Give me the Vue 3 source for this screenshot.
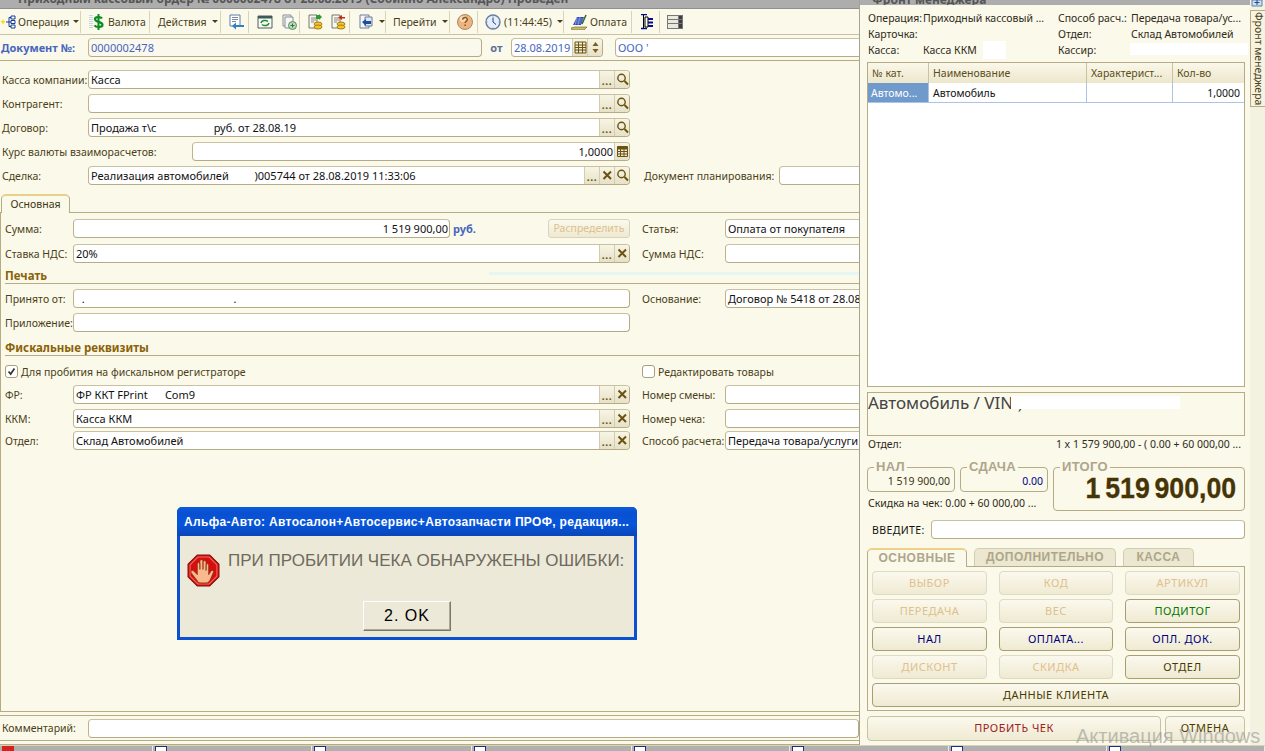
<script setup>
const L = (text, w, extra = {}) => ({ k: 'l', text, w, ...extra })
const F = (w, text = '', extra = {}) => ({ k: 'f', w, text, ...extra })
const DM = ['dots', 'mag']
const DX = ['dots', 'x']

const top = [
  { cells: [L('Касса компании:', 86), F(542, 'Касса', { btns: DM })] },
  { cells: [L('Контрагент:', 86), F(542, '', { btns: DM })] },
  { cells: [L('Договор:', 86), F(542, 'Продажа т\\с                    руб. от 28.08.19', { btns: DM })] },
  { cells: [L('Курс валюты взаиморасчетов:', 190), F(438, '1,0000', { alignEnd: true, btns: ['calc'] })] },
  { cells: [L('Сделка:', 86), F(542, 'Реализация автомобилей         )005744 от 28.08.2019 11:33:06', { btns: ['dots', 'x', 'mag'] }), L('Документ планирования:', 135, { ml: 14 }), F(100)] }
]

const rL = (t) => L(t, 83, { ml: 12 })
const body1 = [
  { mt: 6, cells: [L('Сумма:', 68), F(377, '1 519 900,00', { alignEnd: true }), { k: 'rub' }, { k: 'dist' }, rL('Статья:'), F(140, 'Оплата от покупателя')] },
  { mt: 6, cells: [L('Ставка НДС:', 68), F(557, '20%', { btns: DX }), rL('Сумма НДС:'), F(140)] }
]
const body2 = [
  { mt: 5, cells: [L('Принято от:', 68), F(557, '  .                                                    .'), rL('Основание:'), F(140, 'Договор № 5418 от 28.08.')] },
  { mt: 5, cells: [L('Приложение:', 68), F(557)] }
]
const body3 = [
  { mt: 0, cells: [L('ФР:', 68), F(557, 'ФР ККТ FPrint      Com9', { btns: DX }), rL('Номер смены:'), F(140)] },
  { mt: 5, cells: [L('ККМ:', 68), F(557, 'Касса ККМ', { btns: DX }), rL('Номер чека:'), F(140)] },
  { mt: 3, cells: [L('Отдел:', 68), F(557, 'Склад Автомобилей', { btns: DX }), rL('Способ расчета:'), F(140, 'Передача товара/услуги')] }
]

const toolbar = [
  { w: 81, pl: 0, icon: 'op', text: 'Операция', caret: true, gap: 2 },
  { w: 69, pl: 8, icon: 'usd', text: 'Валюта' },
  { w: 71, pl: 8, text: 'Действия', caret: true },
  { w: 28, pl: 7, icon: 'back' },
  { w: 51, pl: 8, icons: ['cycle', 'plus'], gap: 8 },
  { w: 50, pl: 7, icons: ['coinG', 'coinR'], gap: 7 },
  { w: 36, pl: 8, icon: 'go', caret: true },
  { w: 64, pl: 7, text: 'Перейти', caret: true },
  { w: 28, pl: 7, icon: 'help' },
  { w: 86, pl: 7, icon: 'clock', text: '(11:44:45)', caret: true },
  { w: 68, pl: 7, icon: 'pay', text: 'Оплата' },
  { w: 28, pl: 8, icon: 'tree' },
  { w: 30, pl: 7, icon: 'list', last: true }
]

const icons = {
  op: '<path d="M3 5l.8 2 2 .8-2 .8L3 11l-.8-2.400-2-.8 2-.8z" fill="#f5d800"/><path d="M6 8h3M9 3.500v9M9 3.500h2M9 8h2M9 12.500h2" stroke="#123c9c" fill="none"/><path d="M11 2h4v3h-4zM11 6.500h4v3h-4zM11 11h4v3h-4z" fill="#fff" stroke="#123c9c"/>',
  usd: '<path d="M1 1v14M3 1v14" stroke="#8fb1dc" stroke-dasharray="1 1"/><path d="M13 4.500C12 2.800 6 2.300 6 5.200c0 3 7.500 2.300 7.500 5.500 0 3-6.500 2.800-8 .6" fill="none" stroke="#0a8a20" stroke-width="2.200"/><path d="M9.500 0v16" stroke="#0a8a20" stroke-width="2"/>',
  back: '<path d="M2 1h10v11H2z" fill="#fff" stroke="#5c7fa8"/><path d="M4 3.500h6M4 5.500h6M4 7.500h4" stroke="#7d8c9c"/><path d="M16 11H8V8.500L4 12l4 3.500V13h8z" fill="#2e7fc4"/>',
  cycle: '<path d="M1 2h14v12H1z" fill="#fafaf2" stroke="#4f5f5f"/><path d="M1 2h14v2.500H1z" fill="#3b5a5a"/><path d="M4 9a4 3 0 0 1 7-1.500M12 9a4 3 0 0 1-7 1.500" fill="none" stroke="#1c8a3a" stroke-width="1.500"/>',
  plus: '<path d="M2 1h8v11H2z" fill="#f3f3f1" stroke="#8b8f93"/><path d="M4 3h8v11H4z" fill="#f6f6f4" stroke="#8b8f93"/><circle cx="11.500" cy="11.500" r="4" fill="#bcd9b8" stroke="#5d8a6a"/><path d="M9.500 11.500h4M11.500 9.500v4" stroke="#2b7a3a"/>',
  coinG: '<path d="M2 1h8v13H2z" fill="#f8f8ee" stroke="#777"/><path d="M4 4h5M4 6h5M4 8h3" stroke="#888"/><path d="M9 1h3v-1l3 3-3 3V5H9z" fill="#2e9a35"/><ellipse cx="11" cy="10" rx="4" ry="2" fill="#f1c232" stroke="#a77f10"/><ellipse cx="11" cy="13" rx="4" ry="2" fill="#f1c232" stroke="#a77f10"/>',
  coinR: '<path d="M2 1h8v13H2z" fill="#f8f8ee" stroke="#777"/><path d="M4 4h5M4 6h5M4 8h3" stroke="#888"/><path d="M15 3h-3V1L8 3.500 12 6V4.500h3z" fill="#c92a20"/><ellipse cx="11" cy="10" rx="4" ry="2" fill="#f1c232" stroke="#a77f10"/><ellipse cx="11" cy="13" rx="4" ry="2" fill="#f1c232" stroke="#a77f10"/>',
  go: '<path d="M2 1h9v13H2z" fill="#f4f6fb" stroke="#6f7f95"/><path d="M7 3h7v9H7z" fill="#dfe8f6" stroke="#6f7f95"/><path d="M4 8l4-3v2h5v3H8v2z" fill="#1c4fa0"/>',
  help: '<circle cx="8" cy="8" r="7.500" fill="#eeb47e" stroke="#a98a6a"/><circle cx="6" cy="5" r="3" fill="#f7dcc0"/><path d="M5.700 5.800c0-3 4.700-3 4.700-.4 0 1.800-2.300 1.700-2.300 3.600" fill="none" stroke="#8a5a22" stroke-width="1.400"/><path d="M7.300 10.500h1.600v1.600H7.300z" fill="#8a5a22"/>',
  clock: '<circle cx="8" cy="8" r="7" fill="#e6eefb" stroke="#6a7f9f" stroke-width="1.400"/><path d="M8 3.500V8l3 2.500" fill="none" stroke="#1d3f88"/><path d="M8 1.500v1M8 13.500v1M1.500 8h1M13.500 8h1" stroke="#59a"/>',
  pay: '<path d="M0 14l4-1h12l-3 3H1z" fill="#cdbb6c" stroke="#5f5a2a" stroke-width=".6"/><path d="M2 11l4-8h7l-3 8z" fill="#2a47b8"/><path d="M4 9h6M5 7h6M6 5h6M6 3l-2 8M9 3l-2 8" stroke="#a8b8ee" stroke-width=".6"/><path d="M11 10l4-9" stroke="#2f6a25" stroke-width="1.500"/>',
  tree: '<path d="M1 .5h6M1 14.500h6" stroke="#000a8a" stroke-width="1.400"/><path d="M3.500 1v13" stroke="#000" /><path d="M5 3h3v10H5z" fill="#fff" stroke="#000"/><path d="M8 4h5v2H8zM8 7.500h5v2H8zM8 11h5v2H8z" fill="#0a0a8a"/>',
  list: '<path d="M0 1h16v14H0z" fill="#777"/><path d="M1 2h10v3H1zM1 6h10v3H1zM1 10h10v4H1z" fill="#e9e9e0"/><path d="M12 2h3v3h-3zM12 6h3v3h-3zM12 10h3v4h-3z" fill="#3e3e3e"/>',
  mag: '<circle cx="6.500" cy="6" r="3.700" fill="none" stroke="#6a5310" stroke-width="1.400"/><path d="M9.500 9l3.500 3.500" stroke="#6a5310" stroke-width="2"/>',
  x: '<path d="M3.500 3.500l7.500 7.500M11 3.500L3.500 11" stroke="#6a5310" stroke-width="2"/>',
  calc: '<path d="M2.500 2.500h10v10h-10z" fill="none" stroke="#6a5310"/><path d="M2.500 5h10M2.500 7.500h10M2.500 10h10M5.500 5v7.500M9 5v7.500" stroke="#6a5310"/><path d="M2.500 2.500h10V5h-10z" fill="#6a5310"/>',
  cal: '<path d="M2 2h11v11H2z" fill="none" stroke="#6a5310"/><path d="M2 5h11M2 7.500h11M2 10h11M5.500 2v11M9.500 2v11" stroke="#6a5310"/>',
  spin: '<path d="M7.500 2l3 4h-6zM7.500 13l3-4h-6z" fill="#7a5f18"/>'
}

const info = [
  ['Операция:', 'Приходный кассовый ...', 'Способ расч.:', 'Передача товара/ус...'],
  ['Карточка:', '', 'Отдел:', 'Склад Автомобилей'],
  ['Касса:', 'Касса ККМ', 'Кассир:', '']
]

const keys = [
  { t: 'ВЫБОР', off: true }, { t: 'КОД', off: true }, { t: 'АРТИКУЛ', off: true },
  { t: 'ПЕРЕДАЧА', off: true }, { t: 'ВЕС', off: true }, { t: 'ПОДИТОГ', c: 'green' },
  { t: 'НАЛ', c: 'navy' }, { t: 'ОПЛАТА...', c: 'navy' }, { t: 'ОПЛ. ДОК.', c: 'navy' },
  { t: 'ДИСКОНТ', off: true }, { t: 'СКИДКА', off: true }, { t: 'ОТДЕЛ', c: 'olive' },
  { t: 'ДАННЫЕ КЛИЕНТА', c: 'olive', wide: true }
]

const tasks = [153, 159, 160, 160, 158, 159, 158, 158]
</script>

<template>
  <div class="app">
    <div class="main">
      <section class="left">
        <div class="title"><b>Приходный кассовый ордер № 0000002478 от 28.08.2019 (Собинно Александро) Проведен</b></div>

        <div class="toolbar">
          <div v-for="(g, i) in toolbar" :key="i" class="tb" :class="{ last: g.last }" :style="{ width: g.w + 'px', paddingLeft: g.pl + 'px', gap: (g.gap || 3) + 'px' }">
            <svg v-if="g.icon" class="ti" viewBox="0 0 16 16" v-html="icons[g.icon]"></svg>
            <svg v-for="n in g.icons || []" :key="n" class="ti" viewBox="0 0 16 16" v-html="icons[n]"></svg>
            <span v-if="g.text" class="tt">{{ g.text }}</span>
            <i v-if="g.caret" class="caret"></i>
          </div>
        </div>

        <div class="docrow">
          <b class="doclbl">Документ №:</b>
          <div class="fld dis blue docnum"><span class="val">0000002478</span></div>
          <b class="ot">от</b>
          <div class="fld blue date">
            <span class="val">28.08.2019</span>
            <span class="bt"><svg viewBox="0 0 15 15" v-html="icons.cal"></svg></span>
            <span class="bt"><svg viewBox="0 0 15 15" v-html="icons.spin"></svg></span>
          </div>
          <div class="fld blue org"><span class="val">ООО '</span></div>
        </div>

        <div class="form">
          <div class="toprows">
            <div v-for="(r, i) in top" :key="i" class="row">
              <template v-for="(c, j) in r.cells" :key="j">
                <span v-if="c.k === 'l'" class="lbl" :style="{ width: c.w + 'px', marginLeft: (c.ml || 0) + 'px' }">{{ c.text }}</span>
                <div v-else class="fld" :style="{ width: c.w + 'px' }">
                  <span class="val" :class="{ end: c.alignEnd }">{{ c.text }}</span>
                  <span v-for="b in c.btns || []" :key="b" class="bt">
                    <span v-if="b === 'dots'" class="dots">...</span>
                    <svg v-else viewBox="0 0 15 15" v-html="icons[b]"></svg>
                  </span>
                </div>
              </template>
            </div>
          </div>

          <div class="tabhead"><span class="tab">Основная</span></div>

          <div class="tabbody">
            <div v-for="(r, i) in body1" :key="'a' + i" class="row" :style="{ marginTop: r.mt + 'px' }">
              <template v-for="(c, j) in r.cells" :key="j">
                <span v-if="c.k === 'l'" class="lbl" :style="{ width: c.w + 'px', marginLeft: (c.ml || 0) + 'px' }">{{ c.text }}</span>
                <b v-else-if="c.k === 'rub'" class="rub">руб.</b>
                <span v-else-if="c.k === 'dist'" class="dist">Распределить</span>
                <div v-else class="fld" :style="{ width: c.w + 'px' }">
                  <span class="val" :class="{ end: c.alignEnd }">{{ c.text }}</span>
                  <span v-for="b in c.btns || []" :key="b" class="bt">
                    <span v-if="b === 'dots'" class="dots">...</span>
                    <svg v-else viewBox="0 0 15 15" v-html="icons[b]"></svg>
                  </span>
                </div>
              </template>
            </div>

            <div class="sect s1"><b>Печать</b></div>

            <div v-for="(r, i) in body2" :key="'b' + i" class="row" :style="{ marginTop: r.mt + 'px' }">
              <template v-for="(c, j) in r.cells" :key="j">
                <span v-if="c.k === 'l'" class="lbl" :style="{ width: c.w + 'px', marginLeft: (c.ml || 0) + 'px' }">{{ c.text }}</span>
                <div v-else class="fld" :style="{ width: c.w + 'px' }"><span class="val">{{ c.text }}</span></div>
              </template>
            </div>

            <div class="sect s2"><b>Фискальные реквизиты</b></div>

            <div class="checks">
              <label class="chk c1"><span class="box"><svg viewBox="0 0 13 13"><path d="M3 6.500l2.500 3L10 3" fill="none" stroke="#333" stroke-width="2"/></svg></span>Для пробития на фискальном регистраторе</label>
              <label class="chk"><span class="box"></span>Редактировать товары</label>
            </div>

            <div v-for="(r, i) in body3" :key="'c' + i" class="row" :style="{ marginTop: r.mt + 'px' }">
              <template v-for="(c, j) in r.cells" :key="j">
                <span v-if="c.k === 'l'" class="lbl" :style="{ width: c.w + 'px', marginLeft: (c.ml || 0) + 'px' }">{{ c.text }}</span>
                <div v-else class="fld" :style="{ width: c.w + 'px' }">
                  <span class="val">{{ c.text }}</span>
                  <span v-for="b in c.btns || []" :key="b" class="bt">
                    <span v-if="b === 'dots'" class="dots">...</span>
                    <svg v-else viewBox="0 0 15 15" v-html="icons[b]"></svg>
                  </span>
                </div>
              </template>
            </div>
          </div>
        </div>

        <div class="comment">
          <span class="lbl cl">Комментарий:</span>
          <div class="fld cf"></div>
        </div>
      </section>

      <aside class="rpanel">
        <div class="rtitle"><b>Фронт менеджера</b></div>

        <div class="info">
          <template v-for="(r, i) in info" :key="i">
            <span v-for="(c, j) in r" :key="j" class="icell">{{ c }}</span>
          </template>
          <i class="mask m1"></i>
          <i class="mask m2"></i>
        </div>

        <div class="table">
          <div class="th">№ кат.</div>
          <div class="th">Наименование</div>
          <div class="th">Характерист...</div>
          <div class="th">Кол-во</div>
          <div class="td sel">Автомо...</div>
          <div class="td">Автомобиль</div>
          <div class="td"></div>
          <div class="td qty">1,0000</div>
        </div>

        <div class="vin">Автомобиль / VIN )<i class="vinmask"></i></div>

        <div class="sub">
          <span>Отдел:</span>
          <span>1 x 1 579 900,00 - ( 0.00 + 60 000,00 ...</span>
        </div>

        <div class="totals">
          <div class="tleft">
            <div class="pair">
              <fieldset class="fs small"><legend>НАЛ</legend><div class="amt">1 519 900,00</div></fieldset>
              <fieldset class="fs small"><legend>СДАЧА</legend><div class="amt nv">0.00</div></fieldset>
            </div>
            <div class="disc">Скидка на чек: 0.00 + 60 000,00 ...</div>
          </div>
          <fieldset class="fs big"><legend>ИТОГО</legend><div class="sum"><span>1 519 900,00</span></div></fieldset>
        </div>

        <div class="enter">
          <span class="el">ВВЕДИТЕ:</span>
          <div class="fld ef"></div>
        </div>

        <div class="ktabs">
          <span class="ktab on">ОСНОВНЫЕ</span>
          <span class="ktab k2">ДОПОЛНИТЕЛЬНО</span>
          <span class="ktab k3">КАССА</span>
        </div>
        <div class="keys">
          <button v-for="k in keys" :key="k.t" class="key" :class="[k.c, { off: k.off, wide: k.wide }]">{{ k.t }}</button>
        </div>

        <div class="actions">
          <button class="key act1">ПРОБИТЬ ЧЕК</button>
          <button class="key act2">ОТМЕНА</button>
        </div>
      </aside>

      <div class="strip">
        <svg class="plus" viewBox="0 0 12 7"><path d="M1 0h10v6H1z" fill="#cfe0f4" stroke="#5a7fb0"/><path d="M3.500 2.500h5M6 0v5" stroke="#234a88"/></svg>
        <div class="vtab">Фронт менеджера</div>
      </div>
    </div>

    <div class="taskbar">
      <div v-for="(w, i) in tasks" :key="i" class="task" :style="{ width: w + 'px' }"><i class="tic" :class="{ red: i === 0 }"></i></div>
    </div>

    <div class="dialog">
      <div class="dtitle">Альфа-Авто: Автосалон+Автосервис+Автозапчасти ПРОФ, редакция...</div>
      <div class="dbody">
        <div class="dmsg">
          <svg class="stop" viewBox="0 0 32 32">
            <path d="M10 1h12l9 9v12l-9 9H10l-9-9V10z" fill="#d40f0f" stroke="#8a0a0a"/>
            <path d="M10.500 3h11L29 10.500v11L21.500 29h-11L3 21.500v-11z" fill="none" stroke="#f26a5a"/>
            <path d="M10 26c-2-3-5-6-6-8s2-3 3-1l3 3V10c0-2 2.500-2 2.500 0v5-8c0-2 3-2 3 0v8-7c0-2 3-2 3 0v8-5c0-2 2.500-2 2.500 0v9l2-3c1-2 3.500-1 2.500 1l-3 7c-1 2-2 3-4 3h-5c-2 0-3-.5-3.500-2z" fill="#f8b98e" stroke="#8a3010" stroke-width=".7"/>
          </svg>
          <span>ПРИ ПРОБИТИИ ЧЕКА ОБНАРУЖЕНЫ ОШИБКИ:</span>
        </div>
        <button class="ok">2. OK</button>
      </div>
    </div>

    <div class="watermark">Активация Windows</div>
  </div>
</template>

<style>
html, body { margin: 0; padding: 0; background: #fbf9ea; }
</style>

<style scoped>
.app {
  position: relative;
  width: 1265px;
  height: 751px;
  overflow: hidden;
  display: flex;
  flex-direction: column;
  background: #fbf9ea;
  font-family: "Noto Sans", "Liberation Sans", sans-serif;
  font-size: 10.500px;
  color: #4a3f18;
}
.main { display: flex; height: 745px; }

/* left */
.left {
  width: 860px;
  flex: none;
  display: flex;
  flex-direction: column;
  overflow: hidden;
  box-sizing: border-box;
  border-right: 1px solid #a8a48c;
  border-bottom: 1px solid #b5ab85;
}
.title {
  height: 8px;
  background: #adadad;
  overflow: hidden;
  white-space: nowrap;
  padding-left: 18px;
  color: #555;
  line-height: 0;
  border-bottom: 1px solid #8f8f8f;
}
.title b { display: block; font-size: 12px; line-height: 8px; margin-top: -5px; }
.toolbar {
  height: 26px;
  display: flex;
  align-items: center;
  box-sizing: border-box;
  border-bottom: 1px solid #c9c3a2;
}
.tb {
  flex: none;
  box-sizing: border-box;
  height: 22px;
  display: flex;
  align-items: center;
  border-right: 1px solid #d9d4b8;
}
.tb.last { border-right: 0; }
.ti { width: 16px; height: 16px; flex: none; }
.tt { white-space: nowrap; font-size: 10.500px; }
.caret {
  width: 0; height: 0;
  margin-left: 2px;
  border: 3px solid transparent;
  border-top: 3px solid #4a3f18;
  border-bottom: 0;
}
.docrow {
  height: 26px;
  display: flex;
  align-items: center;
  box-sizing: border-box;
  padding: 0 0 0 1px;
  border-bottom: 1px solid #b5ab85;
}
.doclbl { width: 87px; color: #4766bd; flex: none; font-size: 11px; }
.docnum { width: 394px; }
.ot { width: 29px; text-align: center; color: #5d7099; flex: none; font-size: 11px; }
.date { width: 92px; }
.org { width: 250px; margin-left: 12px; }

.fld {
  box-sizing: border-box;
  flex: none;
  height: 19px;
  display: flex;
  background: #fff;
  border: 1px solid #b5ab85;
  border-top-color: #c9c2a2;
  border-left-color: #bdb48e;
  border-radius: 4px;
  overflow: hidden;
  color: #111;
}
.fld.dis { background: #fbf9ee; }
.fld.blue { color: #4766bd; }
.val {
  flex: 1;
  min-width: 0;
  line-height: 17px;
  padding: 0 1px 0 2px;
  white-space: pre;
  overflow: hidden;
  font-size: 11px;
}
.val.end { text-align: right; }
.bt {
  flex: none;
  width: 15px;
  height: 17px;
  display: flex;
  align-items: center;
  justify-content: center;
  background: linear-gradient(#f8f5e4, #e6e1c8);
  border-left: 1px solid #d3cdb0;
  box-sizing: border-box;
}
.bt svg { width: 15px; height: 15px; flex: none; }
.dots { font-weight: 700; color: #6a5310; line-height: 14px; letter-spacing: .5px; align-self: flex-end; }

.form { flex: 1; display: flex; flex-direction: column; min-height: 0; }
.toprows { padding: 9px 0 0 2px; }
.toprows .row + .row { margin-top: 5px; }
.row { display: flex; height: 19px; align-items: center; white-space: nowrap; }
.lbl { flex: none; box-sizing: border-box; white-space: nowrap; }

.tabhead {
  margin-top: 9px;
  height: 19px;
  padding-left: 1px;
  box-sizing: border-box;
  border-bottom: 1px solid #b5ab85;
}
.tab {
  display: inline-block;
  box-sizing: border-box;
  width: 69px;
  height: 19px;
  text-align: center;
  line-height: 16px;
  background: #fbf9ea;
  border: 1px solid #b5ab85;
  border-bottom: 0;
  border-top: 2px solid #e6d08a;
  border-radius: 5px 5px 0 0;
  color: #3e3515;
  vertical-align: top;
}
.tabbody {
  flex: 1;
  padding-left: 4px;
  box-sizing: border-box;
  border-left: 1px solid #b5ab85;
  border-bottom: 1px solid #b5ab85;
  overflow: hidden;
}
.rub { color: #4766bd; margin-left: 3px; width: 95px; flex: none; font-size: 11px; }
.dist {
  flex: none;
  box-sizing: border-box;
  width: 82px;
  height: 19px;
  line-height: 17px;
  text-align: center;
  color: #e0c08c;
  background: linear-gradient(#fbf9ee, #eee9d2);
  border: 1px solid #d9d4b8;
  border-radius: 3px;
}
.sect { box-sizing: border-box; border-bottom: 1px solid #b5ab85; color: #8a6208; font-size: 11.500px; line-height: 14px; }
.sect b { display: block; }
.s1 {
  height: 21px;
  padding-top: 6px;
  background: linear-gradient(#e6f7f3, #e6f7f3) no-repeat right 0 top 9px / 370px 3px;
}
.s2 { height: 24px; padding-top: 9px; }
.checks { display: flex; height: 29px; align-items: center; padding-top: 2px; box-sizing: border-box; }
.chk { display: flex; align-items: center; gap: 3px; width: 637px; white-space: nowrap; flex: none; }
.box {
  box-sizing: border-box;
  width: 13px; height: 13px;
  background: #fff;
  border: 1px solid #a8a07a;
  border-radius: 3px;
  display: block;
  flex: none;
}
.box svg { display: block; width: 11px; height: 11px; }

.comment {
  height: 26px;
  flex: none;
  display: flex;
  align-items: flex-start;
  box-sizing: border-box;
  margin: 3px 0;
  padding: 3px 0 0 2px;
  border-top: 1px solid #b5ab85;
  border-bottom: 1px solid #b5ab85;
}
.cl { width: 86px; line-height: 19px; }
.cf { flex: 1; }

/* right */
.rpanel {
  width: 390px;
  flex: none;
  box-sizing: border-box;
  padding: 0 5px 0 7px;
  color: #2e2a18;
}
.rtitle {
  height: 5px;
  margin: 0 -5px 0 -7px;
  padding-left: 12px;
  background: #adadad;
  overflow: hidden;
  color: #555;
  font-size: 12px;
  line-height: 8px;
}
.rtitle b { display: block; margin-top: -4px; }
.info {
  position: relative;
  display: grid;
  grid-template-columns: 55px 135px 73px 1fr;
  grid-auto-rows: 16px;
  line-height: 16px;
  margin: 5px 0 4px 1px;
  white-space: nowrap;
}
.mask { position: absolute; background: #fff; }
.m1 { left: 115px; top: 31px; width: 23px; height: 18px; }
.m2 { left: 262px; top: 33px; width: 118px; height: 12px; }
.table {
  box-sizing: border-box;
  height: 325px;
  background: #fff;
  border: 1px solid #b5ab85;
  display: grid;
  grid-template-columns: 61px 158px 86px 1fr;
  grid-template-rows: 20px 20px;
  align-content: start;
}
.th {
  padding-left: 4px;
  line-height: 20px;
  color: #5a4d1a;
  background: linear-gradient(#fbf8ea, #ece6cc);
  border-right: 1px solid #c9c2a2;
  white-space: nowrap;
  overflow: hidden;
}
.th:nth-child(4) { border-right: 0; }
.td {
  box-sizing: border-box;
  padding-left: 4px;
  line-height: 21px;
  color: #111;
  border-bottom: 1px solid #a9c4e4;
  border-right: 1px solid #a9c4e4;
  white-space: nowrap;
  overflow: hidden;
}
.td.sel { background: #7099cc; color: #fff; padding-left: 3px; }
.td.qty { text-align: right; padding-right: 4px; border-right: 0; }
.vin {
  position: relative;
  box-sizing: border-box;
  height: 44px;
  margin-top: 5px;
  border: 1px solid #b5ab85;
  font-size: 17px;
  line-height: 20px;
  color: #444;
  white-space: nowrap;
  overflow: hidden;
}
.vinmask { position: absolute; left: 143px; top: 3px; width: 169px; height: 13px; background: #fff; }
.sub {
  display: flex;
  justify-content: space-between;
  height: 16px;
  line-height: 16px;
  padding: 0 4px 0 1px;
  white-space: nowrap;
}
.totals { display: flex; gap: 5px; margin-top: 8px; }
.tleft { width: 181px; flex: none; }
.pair { display: flex; gap: 5px; }
.fs {
  box-sizing: border-box;
  margin: 0;
  padding: 0;
  min-width: 0;
  border: 1px solid #b5ab85;
  border-radius: 4px;
}
.fs legend {
  margin-left: 6px;
  padding: 0 2px;
  font-family: "Liberation Sans", sans-serif;
  font-size: 13px;
  font-weight: 700;
  line-height: 14px;
  color: #aea68a;
  letter-spacing: .3px;
}
.small { width: 88px; height: 32px; }
.amt { line-height: 14px; text-align: right; padding-right: 4px; color: #3e3515; white-space: nowrap; }
.amt.nv { color: #00008a; }
.disc { margin-top: 4px; line-height: 14px; white-space: nowrap; padding-left: 1px; }
.big { width: 192px; height: 51px; }
.sum {
  text-align: right;
  padding-right: 8px;
  margin-top: -3px;
  font-family: "Liberation Sans", sans-serif;
  font-weight: 700;
  font-size: 30px;
  line-height: 34px;
  color: #463405;
  white-space: nowrap;
  word-spacing: -3px;
  -webkit-text-stroke: .3px #463405;
}
.sum span { display: inline-block; transform: scaleX(.89); transform-origin: right center; }
.enter { display: flex; align-items: center; margin-top: 9px; height: 19px; color: #111; }
.el { width: 64px; padding-left: 5px; box-sizing: border-box; flex: none; letter-spacing: .4px; }
.ef { flex: 1; }
.ktabs { display: flex; gap: 7px; margin-top: 9px; height: 19px; position: relative; z-index: 1; }
.ktab {
  box-sizing: border-box;
  height: 18px;
  line-height: 17px;
  text-align: center;
  font-family: "Liberation Sans", sans-serif;
  font-weight: 700;
  font-size: 12px;
  letter-spacing: .5px;
  color: #aea68a;
  background: #ece7d0;
  border: 1px solid #d3cdb0;
  border-bottom: 0;
  border-radius: 5px 5px 0 0;
  width: 142px;
}
.ktab.k3 { width: 71px; }
.ktab.on {
  width: 100px;
  height: 19px;
  background: #fbf9ea;
  border: 1px solid #b5ab85;
  border-top: 2px solid #efd08a;
  border-bottom: 0;
}
.keys {
  box-sizing: border-box;
  height: 145px;
  margin-top: -1px;
  padding: 4px 4px 0;
  border: 1px solid #b5ab85;
  display: grid;
  grid-template-columns: 115px 114px 115px;
  grid-auto-rows: 24px;
  gap: 4px 12px;
}
.key {
  box-sizing: border-box;
  margin: 0;
  padding: 0 0 2px;
  font-family: inherit;
  font-size: 11px;
  letter-spacing: .5px;
  background: linear-gradient(#fbf9ee, #efead2);
  border: 1px solid #a99e72;
  border-radius: 4px;
}
.key.off { color: #e0c08c; border-color: #dfdac2; }
.key.navy { color: #00007f; }
.key.green { color: #007a00; }
.key.olive { color: #4a3a00; }
.key.wide { grid-column: 1 / -1; }
.actions { display: flex; gap: 4px; margin-top: 5px; }
.act1 { width: 294px; height: 25px; color: #a02020; border-color: #c9c2a2; }
.act2 { width: 80px; height: 25px; color: #4a3a00; border-color: #c9c2a2; }

.strip { flex: 1; background: #f3f1e0; display: flex; flex-direction: column; }
.plus { width: 12px; height: 7px; margin-left: 1px; display: block; }
.vtab {
  box-sizing: border-box;
  margin-top: 3px;
  width: 15px;
  height: 97px;
  writing-mode: vertical-rl;
  text-align: center;
  line-height: 13px;
  color: #4a3f18;
  white-space: nowrap;
  background: #f6f3e1;
  border: 1px solid #b5ab85;
  border-right: 0;
}

/* taskbar */
.taskbar { height: 6px; display: flex; background: #b0b0b0; border-top: 1px solid #d8d3b4; box-sizing: border-box; overflow: hidden; }
.task { box-sizing: border-box; border-right: 1px solid #efeadb; padding-left: 2px; flex: none; }
.tic { display: block; width: 12px; height: 5px; background: #fff; border: 1px solid #1c2f8a; border-bottom: 0; box-sizing: border-box; }
.tic.red { background: #d8201c; border-color: #d8201c; }

/* dialog */
.dialog {
  position: absolute;
  left: 177px;
  top: 507px;
  width: 460px;
  height: 133px;
  box-sizing: border-box;
  background: #0a50d0;
  padding: 0 3px 3px;
  border-radius: 5px 5px 0 0;
  display: flex;
  flex-direction: column;
}
.dtitle {
  height: 29px;
  margin: 0 -3px;
  padding-left: 7px;
  line-height: 31px;
  color: #fff;
  font-family: "Liberation Sans", sans-serif;
  font-size: 12px;
  font-weight: 700;
  letter-spacing: .33px;
  white-space: nowrap;
  background: linear-gradient(#0a5de0, #0a50d0 20%, #0655dc 60%, #0a46b8);
  border-radius: 5px 5px 0 0;
}
.dbody { flex: 1; background: #ece9d8; display: flex; flex-direction: column; align-items: center; }
.dmsg {
  align-self: stretch;
  display: flex;
  align-items: flex-start;
  padding: 15px 0 0 7px;
  height: 65px;
  box-sizing: border-box;
  font-family: "Liberation Sans", sans-serif;
  font-size: 17px;
  line-height: 20px;
  color: #6e6a5e;
  white-space: nowrap;
}
.stop { width: 33px; height: 33px; margin: 3px 8px 0 0; flex: none; }
.ok {
  width: 88px;
  height: 30px;
  padding: 0;
  font-family: "Liberation Sans", sans-serif;
  font-size: 16px;
  letter-spacing: 1px;
  color: #000;
  background: #ece9d8;
  border: 1px solid;
  border-color: #fff #7a7868 #7a7868 #fff;
  box-shadow: inset -1px -1px 0 #aca899;
}
.watermark {
  position: absolute;
  left: 1076px;
  top: 725px;
  font-family: "Liberation Sans", sans-serif;
  font-size: 20px;
  line-height: 22px;
  color: rgba(150, 150, 150, .6);
  white-space: nowrap;
  pointer-events: none;
}
</style>
